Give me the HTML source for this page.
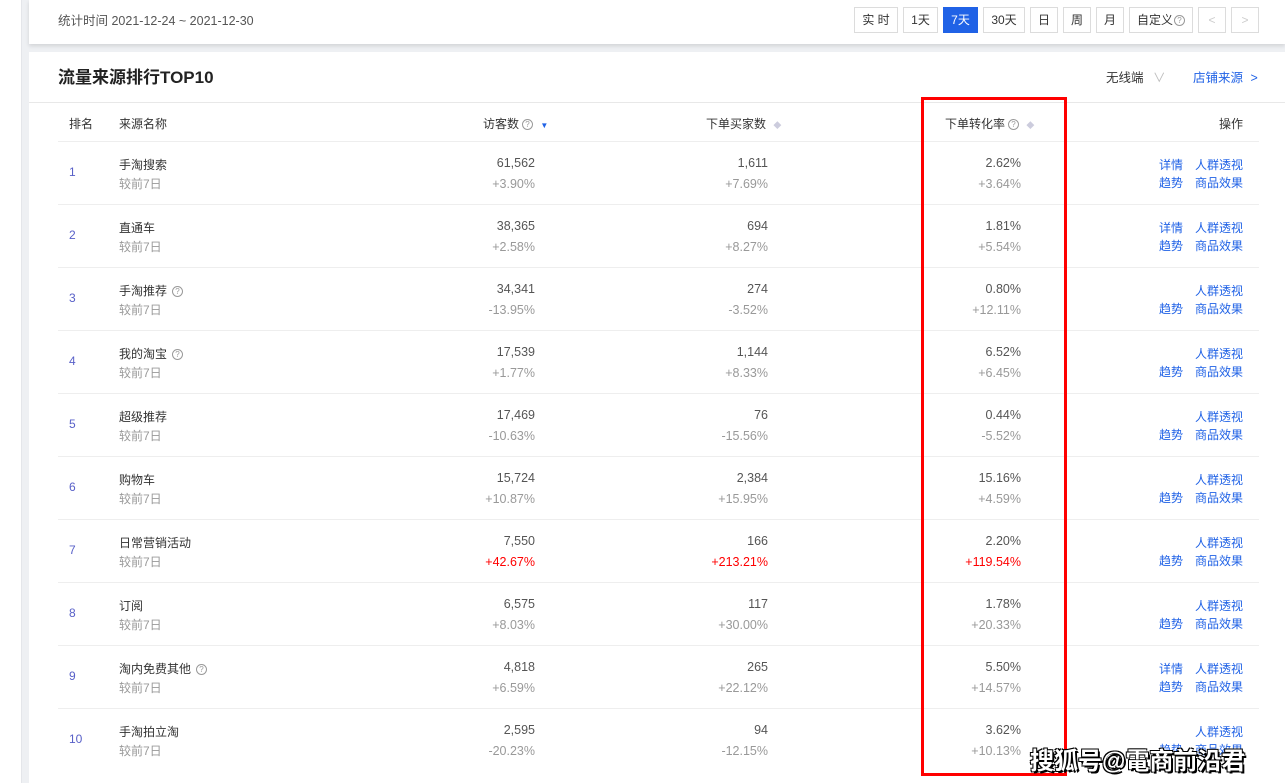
<!DOCTYPE html><html><head><meta charset="utf-8"><style>
*{margin:0;padding:0;box-sizing:border-box}
body{width:1285px;height:783px;overflow:hidden;background:#eef0f3;font-family:"Liberation Sans","Noto Sans CJK SC",sans-serif;font-size:12px;color:#333;position:relative}
.strip{position:absolute;left:0;top:0;width:22px;height:783px;background:#fff;border-right:1px solid #e4e6ea}
.top{position:absolute;left:29px;top:0;width:1256px;height:44px;background:#fff;box-shadow:0 2px 4px rgba(0,0,0,.12)}
.top .t{position:absolute;left:29px;top:10px;color:#555;font-size:12.5px}
.btn{position:absolute;top:7px;height:26px;border:1px solid #dcdcdc;background:#fff;font-size:12px;line-height:24px;text-align:center;color:#333}
.btn.on{background:#2062e6;color:#fff;border-color:#2062e6}
.card{position:absolute;left:29px;top:52px;width:1256px;height:731px;background:#fff}
.title{position:absolute;left:29px;top:11px;font-size:17px;font-weight:bold;color:#222}
.ab{position:absolute;top:15px;font-size:12.5px}
.hl{position:absolute;left:0;top:50px;width:1256px;height:1px;background:#e8e8e8}
.abs{position:absolute;white-space:nowrap}
.r{text-align:right}
.line{position:absolute;left:29px;width:1201px;height:1px;background:#eee}
.blue{color:#2062e6}
.gray{color:#999}
.red{color:#f00}
.v{color:#555}
.q{display:inline-block;width:11px;height:11px;border:1px solid #999;border-radius:50%;font-size:8px;line-height:9px;text-align:center;color:#999;vertical-align:1px;margin-left:3px}
.box{position:absolute;left:921px;top:97px;width:146px;height:679px;border:3px solid #f00}
.wm{position:absolute;left:1030px;top:741px;font-size:24px;font-weight:bold;color:#fff;text-shadow:2px 2px 0 #000,-1px -1px 0 #000,1px -1px 0 #000,-1px 1px 0 #000;letter-spacing:0px}
</style></head><body>
<div class="strip"></div>
<div class="top"><div class="t">统计时间 2021-12-24 ~ 2021-12-30</div>
<div class="btn" style="left:825px;width:44px">实 时</div>
<div class="btn" style="left:874px;width:35px">1天</div>
<div class="btn on" style="left:914px;width:35px">7天</div>
<div class="btn" style="left:954px;width:42px">30天</div>
<div class="btn" style="left:1001px;width:28px">日</div>
<div class="btn" style="left:1034px;width:28px">周</div>
<div class="btn" style="left:1067px;width:28px">月</div>
<div class="btn" style="left:1100px;width:64px">自定义<span class="q" style="margin-left:1px">?</span></div>
<div class="btn" style="left:1169px;width:28px;color:#ccc">&lt;</div>
<div class="btn" style="left:1202px;width:28px;color:#ccc">&gt;</div>
</div>
<div class="card">
<div class="title">流量来源排行TOP10</div>
<div class="ab" style="left:1077px;color:#333">无线端 <span style="color:#bbb;margin-left:6px">∨</span></div>
<div class="ab blue" style="left:1164px">店铺来源 <span style="margin-left:4px">&gt;</span></div>
<div class="hl"></div>
</div>
<div class="abs" style="left:69px;top:115px">排名</div>
<div class="abs" style="left:119px;top:115px">来源名称</div>
<div class="abs" style="left:483px;top:115px">访客数<span class="q">?</span> <span style="color:#2062e6;font-size:8px;margin-left:4px">▼</span></div>
<div class="abs" style="left:706px;top:115px">下单买家数 <span style="color:#ccd;font-size:8px;margin-left:4px">◆</span></div>
<div class="abs" style="left:945px;top:115px">下单转化率<span class="q">?</span> <span style="color:#ccd;font-size:8px;margin-left:4px">◆</span></div>
<div class="abs" style="left:1219px;top:115px">操作</div>
<div class="line" style="top:141px;left:58px"></div>
<div id="rows"></div>
<div class="box"></div>
<div class="wm">搜狐号@電商前沿君</div>
<script>
var d=[["手淘搜索",0,"61,562","+3.90%","1,611","+7.69%","2.62%","+3.64%",1],
["直通车",0,"38,365","+2.58%","694","+8.27%","1.81%","+5.54%",1],
["手淘推荐",1,"34,341","-13.95%","274","-3.52%","0.80%","+12.11%",0],
["我的淘宝",1,"17,539","+1.77%","1,144","+8.33%","6.52%","+6.45%",0],
["超级推荐",0,"17,469","-10.63%","76","-15.56%","0.44%","-5.52%",0],
["购物车",0,"15,724","+10.87%","2,384","+15.95%","15.16%","+4.59%",0],
["日常营销活动",0,"7,550","+42.67%","166","+213.21%","2.20%","+119.54%",0,1],
["订阅",0,"6,575","+8.03%","117","+30.00%","1.78%","+20.33%",0],
["淘内免费其他",1,"4,818","+6.59%","265","+22.12%","5.50%","+14.57%",1],
["手淘拍立淘",0,"2,595","-20.23%","94","-12.15%","3.62%","+10.13%",0]];
var h="";
d.forEach(function(r,i){var y=141+i*63;var c=r[9]?"red":"gray";
h+='<div class="abs" style="color:#5860c8;left:69px;top:'+(y+24)+'px">'+(i+1)+'</div>';
h+='<div class="abs" style="left:119px;top:'+(y+15)+'px">'+r[0]+(r[1]?'<span class="q" style="margin-left:5px">?</span>':'')+'</div>';
h+='<div class="abs gray" style="left:119px;top:'+(y+34)+'px">较前7日</div>';
[[535,2],[768,4],[1021,6]].forEach(function(p){
h+='<div class="abs r v" style="right:'+(1285-p[0])+'px;top:'+(y+15)+'px;font-size:12.5px">'+r[p[1]]+'</div>';
h+='<div class="abs r '+c+'" style="right:'+(1285-p[0])+'px;top:'+(y+36)+'px;font-size:12.5px">'+r[p[1]+1]+'</div>';});
if(r[8])h+='<div class="abs blue" style="left:1159px;top:'+(y+15)+'px">详情</div>';
h+='<div class="abs blue" style="left:1195px;top:'+(y+15)+'px">人群透视</div>';
h+='<div class="abs blue" style="left:1159px;top:'+(y+33)+'px">趋势</div>';
h+='<div class="abs blue" style="left:1195px;top:'+(y+33)+'px">商品效果</div>';
if(i<9)h+='<div class="line" style="top:'+(y+63)+'px;left:58px"></div>';});
document.getElementById("rows").innerHTML=h;
</script>
</body></html>
